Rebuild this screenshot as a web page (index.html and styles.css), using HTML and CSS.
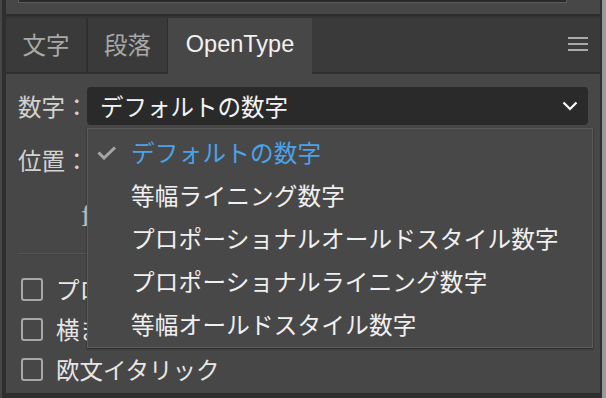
FILE: index.html
```
<!DOCTYPE html>
<html lang="ja">
<head>
<meta charset="utf-8">
<link rel="stylesheet" href="styles.css">
</head>
<body>
<div class="window">
  <div class="edge-left"></div>
  <div class="main">
    <div class="upper"><div class="upper-field"></div></div>
    <div class="divider"></div>
    <div class="panel">
      <div class="tabs">
        <div class="tab tab-a">文字</div>
        <div class="tab tab-b">段落</div>
        <div class="tab tab-c active">OpenType</div>
        <div class="tab-fill">
          <svg class="hamburger" width="20" height="14" viewBox="0 0 20 14"><rect x="0" y="0" width="20" height="2" fill="#a9a9a9"/><rect x="0" y="6" width="20" height="2" fill="#a9a9a9"/><rect x="0" y="12" width="20" height="2" fill="#a9a9a9"/></svg>
        </div>
      </div>
      <div class="body">
        <div class="row">
          <span class="label">数字：</span>
          <div class="select">
            <span class="select-text">デフォルトの数字</span>
            <svg class="chevron" width="16" height="10" viewBox="0 0 16 10"><path d="M1.5 1.5 L8 8 L14.5 1.5" fill="none" stroke="#ffffff" stroke-width="2.2"/></svg>
          </div>
        </div>
        <div class="row row-pos">
          <span class="label">位置：</span>
        </div>
        <div class="glyph-row"><span class="glyph">ﬁ</span></div>
        <div class="sep"></div>
        <div class="check-row"><span class="box"></span><span class="check-text">プロポーショナルメトリクス</span></div>
        <div class="check-row"><span class="box"></span><span class="check-text">横または縦組み中の欧文回転</span></div>
        <div class="check-row"><span class="box"></span><span class="check-text">欧文イタリック</span></div>
      </div>
    </div>
    <div class="bottom"></div>
  </div>
  <div class="edge-right"></div>
</div>
<div class="menu">
  <div class="item selected">
    <svg class="tick" width="20" height="14" viewBox="0 0 20 14"><path d="M1.5 6.5 L7 12 L18 1.5" fill="none" stroke="#a6a6a6" stroke-width="3"/></svg>
    <span>デフォルトの数字</span>
  </div>
  <div class="item"><span>等幅ライニング数字</span></div>
  <div class="item"><span>プロポーショナルオールドスタイル数字</span></div>
  <div class="item"><span>プロポーショナルライニング数字</span></div>
  <div class="item"><span>等幅オールドスタイル数字</span></div>
</div>
</body>
</html>
```
FILE: styles.css
```
* { box-sizing: border-box; }
html, body {
  margin: 0;
  padding: 0;
  width: 606px;
  height: 398px;
  overflow: hidden;
  background: #474747;
  font-family: "Liberation Sans", "Noto Sans CJK JP", sans-serif;
}
.window {
  display: flex;
  width: 606px;
  height: 398px;
}
.edge-left {
  width: 6px;
  border-left: 2px solid #464646;
  background: #2f2f2f;
}
.edge-right {
  width: 6px;
  border-left: 2px solid #2f2f2f;
  background: #9a9a9a;
}
.main {
  flex: 1;
  display: flex;
  flex-direction: column;
  min-width: 0;
}
.upper {
  height: 14px;
  flex: none;
  background: #474747;
  padding-left: 12px;
}
.upper-field {
  width: 549px;
  height: 3px;
  background: #2a2a2a;
  border: 1px solid #5c5c5c;
  border-top: none;
}
.divider {
  height: 4px;
  flex: none;
  background: #2c2c2c;
  border-bottom: 2px solid #343434;
}
.panel {
  flex: 1;
  display: flex;
  flex-direction: column;
  background: #474747;
  min-height: 0;
}
.tabs {
  display: flex;
  flex: none;
  height: 56px;
  background: #3a3a3a;
}
.tab {
  display: flex;
  align-items: center;
  justify-content: center;
  height: 56px;
  padding-bottom: 2px;
  font-size: 23.5px;
  color: #a8a8a8;
  border-bottom: 2px solid #2f2f2f;
  white-space: nowrap;
}
.tab-a { width: 82px; border-right: 2px solid #2f2f2f; }
.tab-b { width: 80px; border-right: 1px solid #2f2f2f; }
.tab-c { width: 144px; }
.tab.active {
  background: #474747;
  color: #f2f2f2;
  border-bottom-color: #474747;
}
.tab-fill {
  flex: 1;
  display: flex;
  align-items: center;
  justify-content: flex-end;
  padding-right: 12px;
  padding-bottom: 2px;
  height: 56px;
  border-bottom: 2px solid #2f2f2f;
}
.hamburger { display: block; }
.body {
  flex: 1;
  display: flex;
  flex-direction: column;
  padding: 13px 12px 0 12px;
}
.row {
  display: flex;
  align-items: center;
  height: 38px;
  flex: none;
}
.row-pos { margin-top: 16px; }
.label {
  width: 69px;
  flex: none;
  white-space: nowrap;
  font-size: 23.5px;
  color: #d2d2d2;
}
.select {
  flex: 1;
  height: 38px;
  display: flex;
  align-items: center;
  justify-content: space-between;
  background: #2a2a2a;
  border-radius: 4px;
  padding: 0 10px 0 13px;
}
.select-text {
  font-size: 23.5px;
  color: #f4f4f4;
  white-space: nowrap;
}
.chevron { display: block; }
.glyph-row {
  height: 44px;
  flex: none;
  margin-top: 14px;
  padding-left: 63px;
  display: flex;
  align-items: center;
}
.glyph {
  font-family: "Liberation Serif", serif;
  font-size: 32px;
  color: #c4c4c4;
}
.sep {
  margin-top: 16px;
  height: 2px;
  flex: none;
  background: #555555;
  border-bottom: 1px solid #424242;
}
.check-row {
  display: flex;
  align-items: center;
  height: 40px;
  flex: none;
  padding-left: 3px;
}
.sep + .check-row { margin-top: 14px; }
.box {
  width: 22px;
  height: 23px;
  border: 2px solid #a8a8a8;
  border-radius: 3px;
  margin-right: 13px;
  flex: none;
}
.check-text {
  font-size: 23.5px;
  color: #e6e6e6;
  white-space: nowrap;
}
.bottom {
  height: 5px;
  flex: none;
  background: #2e2e2e;
}
.menu {
  position: absolute;
  left: 87px;
  top: 128px;
  width: 506px;
  padding: 1px 0;
  background: #484848;
  border: 1px solid #5a5a5a;
  box-shadow: 0 1px 2px rgba(0,0,0,0.45);
}
.item {
  position: relative;
  height: 43.2px;
  display: flex;
  align-items: center;
  padding-left: 43px;
  font-size: 23.6px;
  letter-spacing: 0.2px;
  color: #f0f0f0;
  white-space: nowrap;
}
.item.selected { color: #4aa3ea; }
.tick {
  position: absolute;
  left: 9px;
  top: 16px;
}
```
